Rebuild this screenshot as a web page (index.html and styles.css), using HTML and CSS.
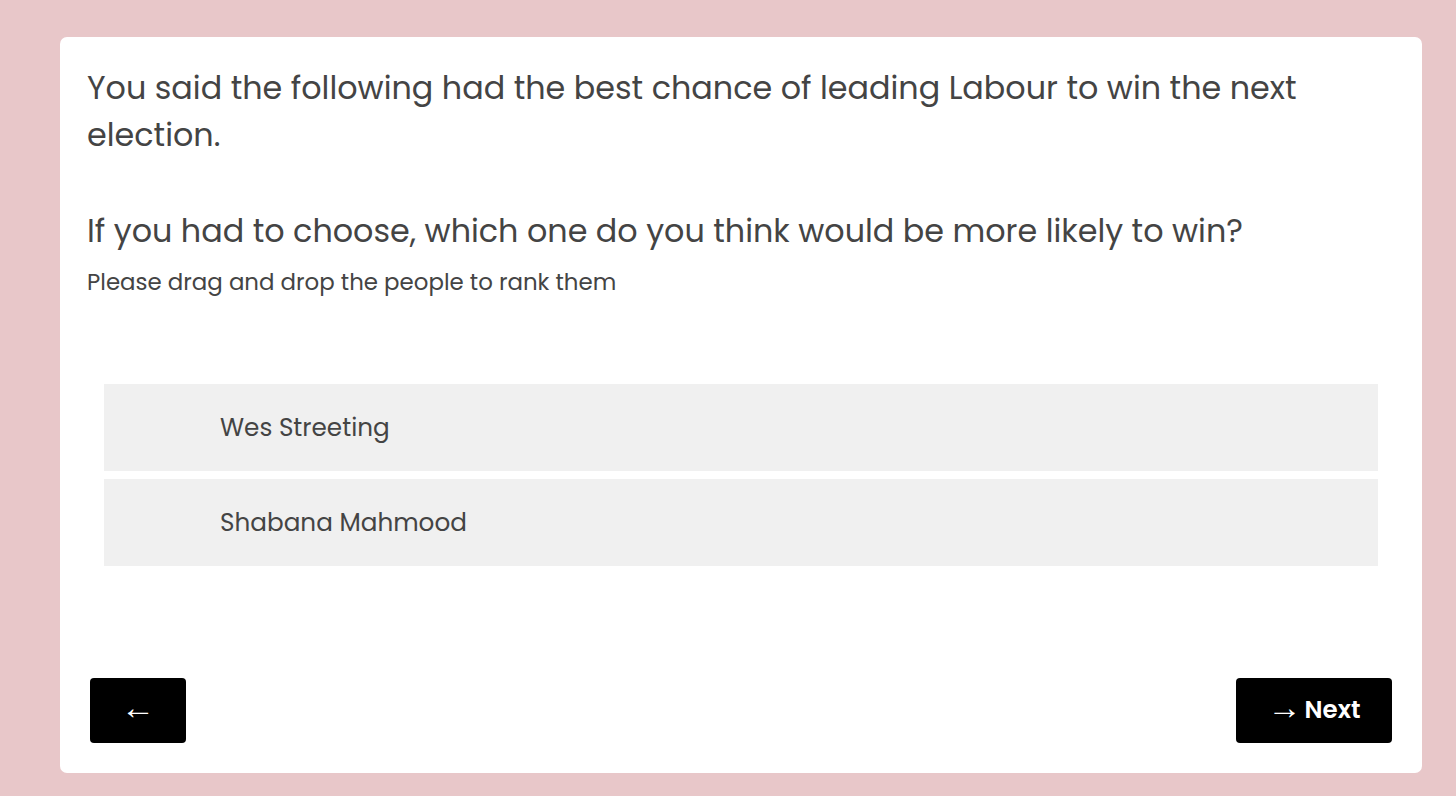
FILE: index.html
```html
<!DOCTYPE html>
<html lang="en">
<head>
<meta charset="utf-8">
<title>Ranking question</title>
<link rel="stylesheet" href="styles.css">
</head>
<body>
<main class="card">
  <h1 class="question">You said the following had the best chance of leading Labour to win the next election.</h1>
  <h2 class="question second">If you had to choose, which one do you think would be more likely to win?</h2>
  <p class="hint">Please drag and drop the people to rank them</p>
  <ul class="rank-list">
    <li class="rank-item">Wes Streeting</li>
    <li class="rank-item">Shabana Mahmood</li>
  </ul>
  <div class="nav">
    <button class="btn btn-back" type="button"><span class="arrow">&larr;</span></button>
    <button class="btn btn-next" type="button"><span class="arrow">&rarr;</span><span class="label">Next</span></button>
  </div>
</main>
</body>
</html>
```

FILE: styles.css
```css
html, body {
  margin: 0;
  padding: 0;
}
body {
  background: #e8c7c9;
  font-family: Poppins, "Open Sans", sans-serif;
  color: #444444;
  padding: 37px 34px 23px 60px;
  height: 796px;
  box-sizing: border-box;
}
.card {
  background: #ffffff;
  border-radius: 7px;
  height: 736px;
  box-sizing: border-box;
  padding: 28px 30px 30px 27px;
  display: flex;
  flex-direction: column;
}
.question {
  margin: 0;
  font-size: 31.8px;
  font-weight: 400;
  line-height: 47px;
}
.second {
  margin-top: 49px;
}
.hint {
  margin: 10px 0 0 0;
  font-size: 22.9px;
  line-height: 34px;
}
.rank-list {
  list-style: none;
  margin: 85px 14px 0 17px;
  padding: 0;
  display: flex;
  flex-direction: column;
  gap: 8px;
}
.rank-item {
  background: #f0f0f0;
  height: 87px;
  box-sizing: border-box;
  padding-left: 116px;
  display: flex;
  align-items: center;
  font-size: 24.7px;
}
.nav {
  margin-top: auto;
  display: flex;
  justify-content: space-between;
  padding: 0 0 0 3px;
}
.btn {
  background: #000000;
  color: #ffffff;
  border: none;
  border-radius: 4px;
  height: 65px;
  padding: 0;
  font-family: Poppins, "Open Sans", sans-serif;
  display: flex;
  align-items: center;
  justify-content: center;
  gap: 3px;
  cursor: pointer;
}
.arrow {
  font-size: 34px;
  line-height: 1;
  display: block;
  margin-top: -7px;
}
.btn-back {
  width: 96px;
}
.btn-next {
  width: 156px;
}
.label {
  font-weight: 600;
  font-size: 24.5px;
  line-height: 1;
  display: block;
}
```
